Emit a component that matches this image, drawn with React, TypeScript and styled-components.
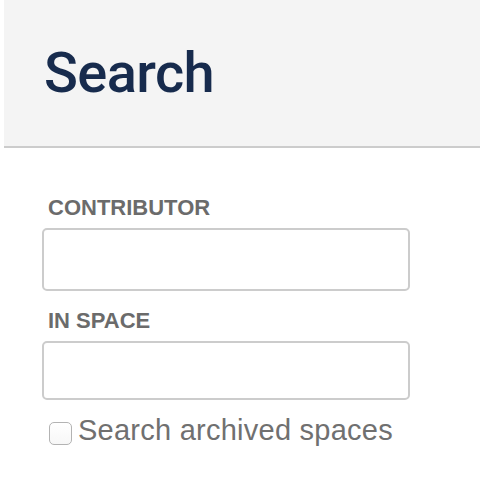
import React from "react";
import styled, { createGlobalStyle } from "styled-components";

const GlobalStyle = createGlobalStyle`
  html, body {
    margin: 0;
    padding: 0;
    background: #ffffff;
  }
  body {
    font-family: "Liberation Sans", Arial, sans-serif;
  }
`;

const Page = styled.div`
  width: 480px;
  height: 494px;
  padding-left: 4px;
  box-sizing: border-box;
  overflow: hidden;
`;

const Header = styled.header`
  height: 148px;
  box-sizing: border-box;
  padding: 45px 0 0 40px;
  background: #f4f4f4;
  border-bottom: 2px solid #cccccc;
`;

const Title = styled.h1`
  margin: 0;
  font-family: Roboto, "Liberation Sans", sans-serif;
  font-size: 56px;
  line-height: 56px;
  font-weight: 500;
  letter-spacing: -0.6px;
  color: #172b4d;
`;

const Form = styled.form`
  display: flex;
  flex-direction: column;
  padding: 49px 0 0 38px;
`;

const Field = styled.div`
  display: flex;
  flex-direction: column;
  & + & {
    margin-top: 19px;
  }
`;

const Label = styled.label`
  padding-left: 6px;
  margin-bottom: 9px;
  font-size: 22px;
  line-height: 22px;
  font-weight: 700;
  color: #6b6b6b;
  text-transform: uppercase;
`;

const TextInput = styled.input<{ $height: number }>`
  width: 368px;
  height: ${(p) => p.$height}px;
  box-sizing: border-box;
  border: 2px solid #cccccc;
  border-radius: 5px;
  background: #ffffff;
  outline: none;
  padding: 0 10px;
  font: inherit;
  font-size: 22px;
`;

const CheckRow = styled.label`
  display: flex;
  align-items: flex-start;
  gap: 6px;
  margin-top: 16px;
  padding-left: 7px;
`;

const Checkbox = styled.input`
  appearance: none;
  width: 23px;
  height: 23px;
  margin: 6px 0 0 0;
  box-sizing: border-box;
  border: 1.5px solid #b3b3b3;
  border-radius: 5px;
  background: linear-gradient(#ffffff, #f7f7f7);
`;

const CheckText = styled.span`
  font-size: 29px;
  line-height: 29px;
  letter-spacing: 0.25px;
  color: #707070;
`;

export default function App() {
  return (
    <Page>
      <GlobalStyle />
      <Header>
        <Title>Search</Title>
      </Header>
      <Form>
        <Field>
          <Label htmlFor="contributor">Contributor</Label>
          <TextInput id="contributor" type="text" $height={63} />
        </Field>
        <Field>
          <Label htmlFor="in-space">In Space</Label>
          <TextInput id="in-space" type="text" $height={59} />
        </Field>
        <CheckRow>
          <Checkbox type="checkbox" />
          <CheckText>Search archived spaces</CheckText>
        </CheckRow>
      </Form>
    </Page>
  );
}
